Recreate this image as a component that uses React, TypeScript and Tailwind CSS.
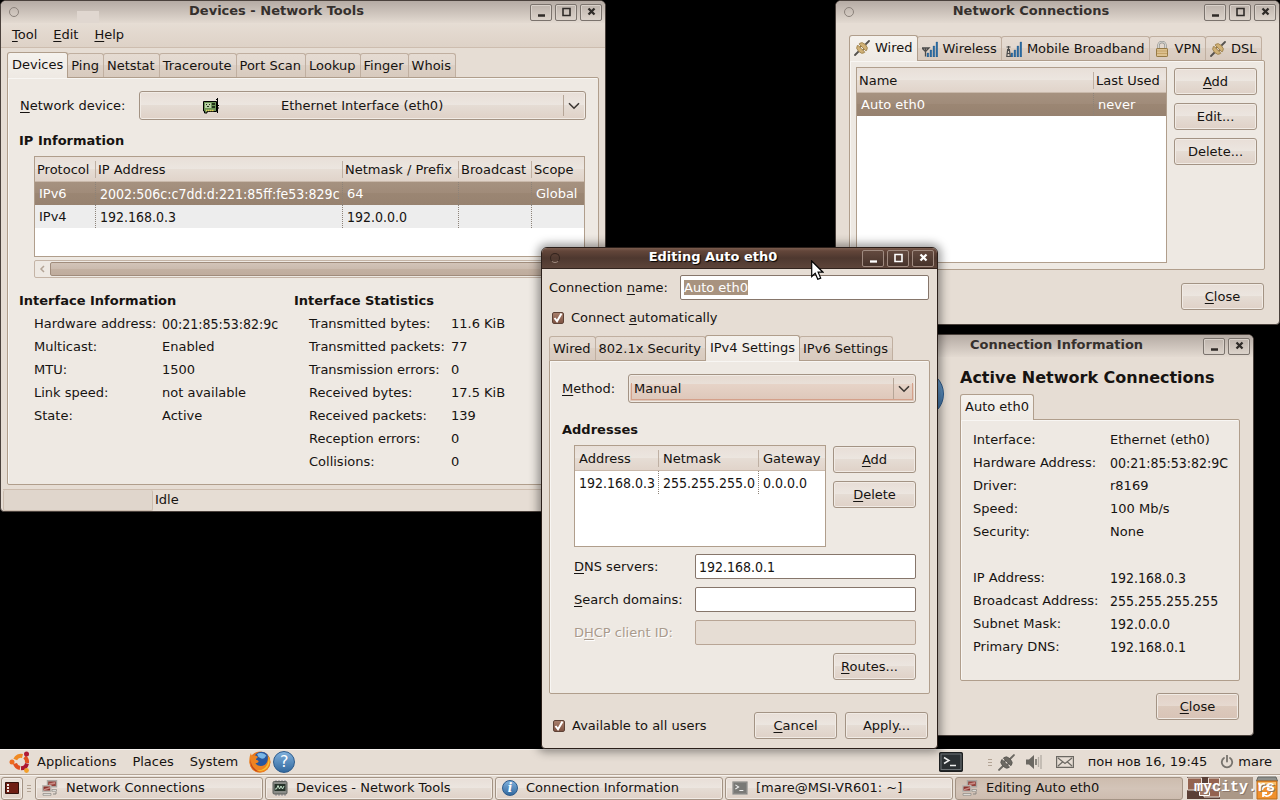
import { clsx } from "clsx";
import React, { useEffect, useRef } from "react";
import { twMerge } from "tailwind-merge";

const buttonFace =
  "border border-[#a39384] rounded-[3px] bg-[linear-gradient(#e8ded7,#ece6e0_49%,#e5dcd4_50%,#dfd1c7)] shadow-[inset_0_0_0_1px_#f1ebe5]";

// addresses are set a little narrower so that long ones fit their columns
const addressFont = "font-['DejaVu_Sans_Condensed','DejaVu_Sans',sans-serif] text-[14px]";
const isAddress = (text: string) => /^[\da-f]+([.:]+[\da-f]+){3,}$/i.test(text);

/* ---------- icons ---------- */

const PlugIcon = ({ grey = false, className = "size-4" }: { grey?: boolean; className?: string }) => (
  <svg viewBox="0 0 16 16" className={className} aria-hidden="true">
    <path d="M1 15 4.500 11.500M11.500 4.500 15 1" stroke={grey ? "#6b6862" : "#55524e"} strokeWidth="1.800" strokeLinecap="round" />
    <g transform="rotate(45 8 8)" fill={grey ? "#6b6862" : "#d0b176"} stroke={grey ? "#55534f" : "#937744"} strokeWidth=".7">
      <path d="M3 7.300h10V6.500A5 3.500 0 0 0 8 3.200a5 3.500 0 0 0-5 3.300Z" />
      <path d="M3 8.900h10v.6a5 3.500 0 0 1-5 3.300 5 3.500 0 0 1-5-3.300Z" />
      <path d="M6 7v2M10 7v2" strokeWidth="1.500" />
    </g>
  </svg>
);

const SignalIcon = ({ tower = false }: { tower?: boolean }) => (
  <svg viewBox="0 0 16 16" className="size-4 shrink-0" aria-hidden="true">
    {[
      [5, 12],
      [8, 9],
      [11, 5],
      [14, 1],
    ].map(([x, y]) => (
      <path key={x} d={`M${x} ${y}h1.800V16h-1.800Z`} fill="#2d6ea5" stroke="#1d4f7c" strokeWidth=".3" />
    ))}
    {tower ? (
      <path d="M.5 6h4M2.500 5v4M1 8.500h3M1.500 9.500h2l.8 6H.8ZM1 12.500h3" fill="none" stroke="#4b4b4b" strokeWidth="1.200" />
    ) : (
      <path d="M0 7h7L3.500 10.500ZM3.500 7v8.500" fill="none" stroke="#4b4b4b" strokeWidth="1.300" />
    )}
  </svg>
);

const LockIcon = () => (
  <svg viewBox="0 0 16 16" className="size-4 shrink-0" aria-hidden="true">
    <path d="M4.500 8V4.500a3.500 3.500 0 0 1 7 0V8" fill="none" stroke="#8d8d89" strokeWidth="2.400" />
    <path d="M4.500 8V4.500a3.500 3.500 0 0 1 7 0V8" fill="none" stroke="#d4d4d0" strokeWidth="1.200" />
    <rect x="2.500" y="7.500" width="11" height="8" rx=".6" fill="#dcc190" stroke="#967a45" />
    <path d="M3 10h10M3 12.500h10" stroke="#c5a368" />
  </svg>
);

const CardIcon = () => (
  <svg viewBox="0 0 16 16" className="size-4" aria-hidden="true">
    <path d="M.5 3.500h13v10H4v1.500H1.500v-2h-1Z" fill="#6c9457" stroke="#000" />
    <path d="M2 5h6v5H2Z" fill="#b9cfa6" />
    <path d="M3 6h1v1H3zM6 6h1v1H6zM4 8h2v1H4zM9 5h3v2H9zM9 8h3v2H9z" fill="#213219" />
    <path d="M3 12.500h8" stroke="#e4cf5b" strokeWidth="1.500" strokeDasharray="1.500 .5" />
    <path d="M14.500 0v15M13 1.500h1.500M14 7.500h2M14 10h2" stroke="#000" />
  </svg>
);

const UbuntuIcon = () => (
  <svg viewBox="0 0 22 22" className="size-[22px]" aria-hidden="true">
    <g fill="none" strokeWidth="4">
      <path d="M6.200 8.500A6.300 6.300 0 0 1 13.500 5" stroke="#f08a24" />
      <path d="M15.600 6A6.300 6.300 0 0 1 18 12" stroke="#e2501f" />
      <path d="M18 12.500A6.300 6.300 0 0 1 12 17.300" stroke="#ab1733" />
      <path d="M11 17A6.300 6.300 0 0 1 6 12.500" stroke="#e2501f" />
    </g>
    <circle cx="3" cy="11" r="2.500" fill="#ee6a1e" />
    <circle cx="17.500" cy="3" r="2.500" fill="#b01a37" />
    <circle cx="17.500" cy="19.500" r="2.400" fill="#f3a02b" />
  </svg>
);

const FirefoxIcon = () => (
  <svg viewBox="0 0 22 22" className="size-[22px]" aria-hidden="true">
    <circle cx="11" cy="11" r="10.500" fill="#e8741a" />
    <circle cx="12.500" cy="8.500" r="7.800" fill="#28579f" />
    <path d="M8 3c3-2 8-1 9.500 2-2 .5-1 2-3 2.500S11 7 9.500 6Z" fill="#79b6e6" />
    <path d="M2 2c0 2 1 3 2.500 3C6 4 8 5 9 6c-1 1-2 1.500-2 3 2 0 3 1 2.500 2-1 1-2 1-3 1 1 3 6 4 9 2 3-2 4-6 3-10 3 3 3.500 8 1.500 12-3 6-11 7-16 3C-1 14 0 6 2 2Z" fill="#ed8322" />
    <path d="M19.500 5c2 4 1 9-1.500 12-3 3-8 4-11 2 5 1 9-1 11-5 1.500-3 2-6 1.500-9Z" fill="#f9c233" />
    <path d="M1.500 8c0 6 4 11 9 12.500C5 21 .5 16 1.500 8Z" fill="#c2411a" />
  </svg>
);

const BlueBadge = ({ sign, className, textClass }: { sign: string; className: string; textClass: string }) => (
  <span
    aria-hidden="true"
    className={clsx(
      "flex shrink-0 items-center justify-center rounded-full border border-[#2b5a8c] bg-linear-to-b from-[#7fb0dc] to-[#33699f] text-white",
      className,
      textClass,
    )}
  >
    {sign}
  </span>
);

const NetworkIcon = () => (
  <svg viewBox="0 0 16 16" className="size-4 shrink-0" aria-hidden="true">
    <path d="M5.500.8h9v6h-9Z" fill="#93413a" stroke="#aaa6a1" strokeWidth="1.400" />
    <path d="M.8 5.800h8v5.500h-8Z" fill="#8a322c" stroke="#bbb7b1" strokeWidth="1.400" />
    <path d="M7 3.500 13 2v2L7 5ZM2 9l6-2v1.500L2 10.500Z" fill="#c98983" />
    <path d="M1 13.500h8v1.800H1Z" fill="#e9e7e3" stroke="#8b8782" strokeWidth=".7" />
    <path d="M10 9.500h4.500v1.800H10Z" fill="#e9e7e3" stroke="#8b8782" strokeWidth=".7" />
    <path d="M11 14h3v-2" fill="none" stroke="#8b8782" />
  </svg>
);

const ChipIcon = () => (
  <svg viewBox="0 0 16 16" className="size-4 shrink-0" aria-hidden="true">
    <path d="M4 0v16M7 0v16M10 0v16M13 0v16" stroke="#8a8a94" strokeWidth="1" />
    <rect x="1" y="1.500" width="14" height="12.500" rx="1.200" fill="#8a8c88" stroke="#5a5c58" />
    <rect x="2.500" y="4" width="11" height="7" fill="#26332a" />
    <path d="M3 9h1.500L6 5.500 7.500 9 9 6l1.500 3L12 6" fill="none" stroke="#c9e6cf" />
  </svg>
);

const TerminalIcon = ({ dim = false }: { dim?: boolean }) => (
  <svg viewBox="0 0 24 20" className={dim ? "h-[14px] w-4 shrink-0" : "h-5 w-6 shrink-0"} preserveAspectRatio="none" aria-hidden="true">
    <rect x=".7" y=".7" width="22.600" height="18.600" rx="1" fill={dim ? "#797976" : "#2b3033"} stroke={dim ? "#b0ada8" : "#1d1f20"} strokeWidth="1.400" />
    <rect x="2" y="2" width="20" height="15.500" fill="none" stroke={dim ? "#989693" : "#757b7f"} strokeWidth=".9" />
    <path d="m5 5.500 5 3-5 3M11 13.500h6" fill="none" stroke="#eee" strokeWidth="1.500" />
  </svg>
);

const SpeakerIcon = () => (
  <svg viewBox="0 0 16 16" className="size-4" aria-hidden="true">
    <path d="M0 5.500h3L8 1v14l-5-4.500H0Z" fill="#6b6862" />
    <path d="M10 5v6" stroke="#6b6862" strokeWidth="1.500" />
    <path d="M12.500 3v10M15 1v14" stroke="#b3aca4" strokeWidth="1.300" />
  </svg>
);

const MailIcon = () => (
  <svg viewBox="0 0 18 12" className="h-3 w-[18px]" aria-hidden="true">
    <path d="M.6.6h16.800v10.800H.6ZM2 2l7 5.500L16 2M2 10l4.500-4M16 10l-4.500-4" fill="none" stroke="#6b6862" strokeWidth="1.200" />
  </svg>
);

const PowerIcon = () => (
  <svg viewBox="0 0 14 14" className="size-[14px]" aria-hidden="true">
    <path d="M4 3a5.200 5.200 0 1 0 6 0M7 .5v6" fill="none" stroke="#77736d" strokeWidth="1.800" strokeLinecap="round" />
  </svg>
);

const TrashIcon = () => (
  <svg viewBox="0 0 22 24" className="h-6 w-[22px] shrink-0" aria-hidden="true">
    <path d="M2 1h18l1.500 4H.5Z" fill="#8e908c" stroke="#666864" />
    <path d="M1 5h20v18H1Z" fill="#f0912d" stroke="#bd6a17" />
    <path d="M2 6h18v3H2Z" fill="#f8bd6c" />
    <path d="M6 14a5 5 0 0 1 9-2M16 15a5 5 0 0 1-9 3M15 8.500V12.500h-4M7 21v-4h4" fill="none" stroke="#fff" strokeWidth="1.800" />
  </svg>
);

const Chevron = () => (
  <svg viewBox="0 0 12 8" className="h-2 w-3" aria-hidden="true">
    <path d="m1 1.200 5 5 5-5" fill="none" stroke="#3c3733" strokeWidth="1.600" />
  </svg>
);

const Pointer = () => (
  <svg viewBox="0 0 13 20" className="absolute left-[811px] top-[260px] z-50 h-5 w-[13px]" aria-hidden="true">
    <path d="M.7 1v15.500L4.200 13.200l2.600 6.100 2.900-1.200-2.600-5.900H12Z" fill="#fff" stroke="#000" strokeWidth="1.200" />
  </svg>
);

/* ---------- window parts ---------- */

type WindowProps = {
  title: string;
  className: string;
  active?: boolean;
  resizable?: boolean;
  children: React.ReactNode;
};

const glyphs: Record<string, string> = {
  Minimise: "M2 9.500h7",
  Maximise: "M2 2.500h7v7H2Z",
  Close: "m2.500 2.500 6 6m0-6-6 6",
};

const Window = ({ title, className, active = false, resizable = true, children }: WindowProps) => (
  <section
    aria-label={title}
    className={clsx(
      "absolute overflow-hidden rounded-t-[6px] rounded-b-[4px] border bg-[#e6ddd4]",
      active ? "z-10 border-[#2b1f1a] shadow-[0_0_10px_3px_rgba(0,0,0,0.4)]" : "border-[#4a413c]",
      className,
    )}
  >
    <header
      className={clsx(
        "flex items-center",
        active
          ? "h-[21px] border-b border-[#32241e] bg-[linear-gradient(#7a5c4e,#63463a_15%,#4e382f_50%,#5d4439)]"
          : "h-[22px] bg-linear-to-b from-[#b5aba4] to-[#e3dad1]",
      )}
    >
      <span className="flex w-[26px] shrink-0 justify-center">
        <span className={clsx("size-[10px] rounded-full border", active ? "border-[#33241e] border-b-[#a48f83]" : "border-[#8b827b]")} />
      </span>
      <h1
        className={clsx(
          "flex-1 pb-[2px] pr-1 text-center font-bold leading-[18px]",
          active ? "text-white [text-shadow:1px_1px_1px_#000]" : "text-[#35302d]",
        )}
      >
        {title}
      </h1>
      <div className="flex shrink-0 gap-[3px] pr-[3px]">
        {Object.keys(glyphs)
          .filter((name) => resizable || name !== "Maximise")
          .map((name) => (
            <button
              key={name}
              type="button"
              aria-label={name}
              className={clsx(
                "flex h-[17px] w-[22px] items-center justify-center rounded-[2px] border",
                active
                  ? "border-[#a08b80] bg-linear-to-b from-[#634a3f] to-[#47332b] text-white"
                  : "border-[#7b736d] text-[#2f2b28] shadow-[inset_0_0_0_1px_#d9d1ca]",
              )}
            >
              <svg viewBox="0 0 11 12" className="h-3 w-[11px]" aria-hidden="true">
                <path d={glyphs[name]} fill="none" stroke="currentColor" strokeWidth={name === "Maximise" ? 1.6 : 2.3} />
              </svg>
            </button>
          ))}
      </div>
    </header>
    {children}
  </section>
);

type Tab = { label: string; icon?: React.ReactNode };

const Tabs = ({ tabs, selected }: { tabs: Tab[]; selected: string }) => (
  <div role="tablist" className="flex items-end pl-px">
    {tabs.map(({ label, icon }) => {
      const isSelected = label === selected;
      return (
        <button
          key={label}
          type="button"
          role="tab"
          aria-selected={isSelected}
          className={clsx(
            "-ml-px flex items-center whitespace-nowrap rounded-t-[3px] border border-b-0",
            icon && "gap-[5px] px-1",
            isSelected
              ? "relative z-[1] -mb-px h-[26px] border-[#b09e8c] bg-linear-to-b from-[#f5f2ee] to-[#eee9e3] pb-[2px]"
              : "h-6 border-[#c0afa0] bg-[linear-gradient(#e5dbd2,#e2d8cf_49%,#dcd0c5_50%,#d8cabe)]",
            !icon && (isSelected ? "px-1" : "pl-[3px] pr-1"),
          )}
        >
          {icon}
          {label}
        </button>
      );
    })}
  </div>
);

const pageClass = "rounded-b-[2px] rounded-tr-[2px] border border-[#b09e8c] bg-[#eee9e3] shadow-[inset_1px_1px_0_#f8f6f3]";

/* Label with an underlined access key */
const Key = ({ text, at = 0 }: { text: string; at?: number }) => (
  <span>
    {text.slice(0, at)}
    <span className="underline underline-offset-2">{text[at]}</span>
    {text.slice(at + 1)}
  </span>
);

const PushButton = ({ children, className }: { children: React.ReactNode; className?: string }) => (
  <button type="button" className={twMerge("h-[27px] w-[83px] shrink-0", buttonFace, className)}>
    {children}
  </button>
);

type GridTableProps = {
  label: string;
  columns: string[];
  widths: string[];
  rows: string[][];
  selectedRow?: number;
  roomy?: boolean;
};

const GridTable = ({ label, columns, widths, rows, selectedRow, roomy = false }: GridTableProps) => (
  <table aria-label={label} className="w-full table-fixed border-separate border-spacing-0 text-left">
    <colgroup>
      {widths.map((width, i) => (
        <col key={i} className={width} />
      ))}
    </colgroup>
    <thead>
      <tr className="bg-[linear-gradient(#e8dfd8,#ece6e0_49%,#e6ddd5_50%,#e0d3c9)]">
        {columns.map((column, i) => (
          <th key={column} scope="col" className="h-[25px] border-b border-[#c9b9ab] p-0 font-normal">
            <span
              className={clsx(
                "block h-[17px] whitespace-nowrap leading-[17px]",
                roomy ? "pl-1" : "pl-[2px]",
                i < columns.length - 1 && "border-r border-[#bfb0a3]",
              )}
            >
              {column}
            </span>
          </th>
        ))}
      </tr>
    </thead>
    <tbody>
      {rows.map((row, r) => (
        <tr
          key={row[0]}
          className={clsx(
            r === selectedRow && "bg-[linear-gradient(#a69280,#a08b79_49%,#9b8673_50%,#978270)] text-white",
            r !== selectedRow && r % 2 === 1 && "bg-[#ededed]",
          )}
        >
          {row.map((cell, i) => (
            <td
              key={i}
              className={clsx(
                "h-[23px] whitespace-nowrap p-0 pl-1",
                isAddress(cell) && addressFont,
                i < row.length - 1 && "border-r border-dotted border-[#8d8379]",
              )}
            >
              {cell}
            </td>
          ))}
        </tr>
      ))}
    </tbody>
  </table>
);

const InfoList = ({ rows, labelWidth }: { rows: string[][]; labelWidth: string }) => (
  <dl>
    {rows.map(([label, value], i) => (
      <div key={i} className="flex h-[23px] items-center whitespace-nowrap">
        <dt className={labelWidth}>{label}</dt>
        <dd className={clsx(isAddress(value) && addressFont)}>{value}</dd>
      </div>
    ))}
  </dl>
);

const CheckBox = ({ id, children }: { id: string; children: React.ReactNode }) => (
  <div className="flex items-center gap-[7px]">
    <span className="relative flex">
      <input
        id={id}
        type="checkbox"
        defaultChecked
        className="peer size-3 appearance-none rounded-[2px] border border-[#5e4236] bg-white checked:bg-linear-to-b checked:from-[#a87f6c] checked:to-[#805443]"
      />
      <svg viewBox="0 0 12 12" className="pointer-events-none absolute inset-0 hidden size-3 peer-checked:block" aria-hidden="true">
        <path d="m2.500 6 2.500 3.200L9.500 1.500" fill="none" stroke="#fff" strokeWidth="2" />
      </svg>
    </span>
    <label htmlFor={id}>{children}</label>
  </div>
);

const Select = ({ id, value, className, tinted = false }: { id: string; value: string; className: string; tinted?: boolean }) => (
  <span className="relative flex flex-1">
    <select
      id={id}
      defaultValue={value}
      className={twMerge(
        "h-[29px] w-full appearance-none outline-none",
        buttonFace,
        tinted && "bg-[linear-gradient(#e6d9d0,#e9e0d8_34%,#e6d3c7_35%,#ddc6b8)]",
        className,
      )}
    >
      <option>{value}</option>
    </select>
    {tinted && <span className="pointer-events-none absolute inset-x-[3px] bottom-[3px] top-[9px] border border-t-0 border-[#d4a08a]" />}
    <span className="pointer-events-none absolute inset-y-1 right-0 flex w-[23px] items-center justify-center border-l border-[#b5a597] pr-[2px]">
      <Chevron />
    </span>
  </span>
);

const entryClass =
  "h-[25px] min-w-0 flex-1 rounded-[2px] border border-[#86766b] bg-white px-[3px] outline-none selection:bg-[#a8937f] selection:text-white disabled:border-[#b8a595] disabled:bg-[#e6ddd4]";

/* ---------- windows ---------- */

const interfaceInfo = [
  ["Hardware address:", "00:21:85:53:82:9c"],
  ["Multicast:", "Enabled"],
  ["MTU:", "1500"],
  ["Link speed:", "not available"],
  ["State:", "Active"],
];

const interfaceStats = [
  ["Transmitted bytes:", "11.6 KiB"],
  ["Transmitted packets:", "77"],
  ["Transmission errors:", "0"],
  ["Received bytes:", "17.5 KiB"],
  ["Received packets:", "139"],
  ["Reception errors:", "0"],
  ["Collisions:", "0"],
];

const connectionInfo = [
  ["Interface:", "Ethernet (eth0)"],
  ["Hardware Address:", "00:21:85:53:82:9C"],
  ["Driver:", "r8169"],
  ["Speed:", "100 Mb/s"],
  ["Security:", "None"],
  ["", ""],
  ["IP Address:", "192.168.0.3"],
  ["Broadcast Address:", "255.255.255.255"],
  ["Subnet Mask:", "192.0.0.0"],
  ["Primary DNS:", "192.168.0.1"],
];

const NetworkTools = () => (
  <Window title="Devices - Network Tools" className="left-0 top-0 w-[606px]">
    <span className="absolute left-[76px] top-[10px] h-3 w-[22px] bg-[#e0d7d0]" />
    <nav className="flex h-[25px] items-center gap-4 border-b border-[#cdbdaf] bg-linear-to-b from-[#e6ddd4] to-[#ded2c7] pl-[11px]">
      {["Tool", "Edit", "Help"].map((item) => (
        <button key={item} type="button">
          <Key text={item} />
        </button>
      ))}
    </nav>
    <div className="px-[6px] pt-1">
      <Tabs
        selected="Devices"
        tabs={["Devices", "Ping", "Netstat", "Traceroute", "Port Scan", "Lookup", "Finger", "Whois"].map((label) => ({ label }))}
      />
      <div className={clsx("pb-[11px] pl-[11px] pr-3 pt-[13px]", pageClass)}>
        <div className="relative flex items-center">
          <label htmlFor="device" className="w-[120px] pl-px">
            <Key text="Network device:" />
          </label>
          <Select id="device" value="Ethernet Interface (eth0)" className="pl-[141px]" />
          <span className="pointer-events-none absolute left-[184px]">
            <CardIcon />
          </span>
        </div>
        <h2 className="mt-[11px] font-bold leading-5">IP Information</h2>
        <div className="ml-[15px] mr-px mt-[5px] h-[101px] border border-[#b09e8c] bg-white">
          <GridTable
            label="IP Information"
            columns={["Protocol", "IP Address", "Netmask / Prefix", "Broadcast", "Scope"]}
            widths={["w-[61px]", "w-[247px]", "w-[116px]", "w-[73px]", "w-auto"]}
            rows={[
              ["IPv6", "2002:506c:c7dd:d:221:85ff:fe53:829c", "64", "", "Global"],
              ["IPv4", "192.168.0.3", "192.0.0.0", "", ""],
            ]}
            selectedRow={0}
          />
        </div>
        <div className="ml-[15px] mr-px mt-[3px] flex h-[18px] items-center rounded-[2px] border border-[#c4b4a6] bg-[#eee9e3]">
          <svg viewBox="0 0 15 16" className="h-4 w-[15px]" aria-hidden="true">
            <path d="m9 5-3 3 3 3" fill="none" stroke="#b3a496" strokeWidth="1.500" />
          </svg>
          <span className="h-[14px] flex-1 rounded-[2px] border border-[#a08c7c] bg-[linear-gradient(#d2c4b8,#cbbbae_49%,#c3b1a2_50%,#bfac9d)]" />
        </div>
        <div className="mt-[11px] flex">
          <div className="w-[275px]">
            <h2 className="font-bold leading-[23px]">Interface Information</h2>
            <div className="pl-[15px]">
              <InfoList rows={interfaceInfo} labelWidth="w-32" />
            </div>
          </div>
          <div>
            <h2 className="font-bold leading-[23px]">Interface Statistics</h2>
            <div className="pl-[15px]">
              <InfoList rows={interfaceStats} labelWidth="w-[142px]" />
            </div>
          </div>
        </div>
      </div>
    </div>
    <footer className="ml-[2px] mt-1 flex h-[22px] items-center border-t border-[#cdbdaf]">
      <span className="h-[21px] w-[150px] rounded-[2px] border border-t-0 border-[#cbbcae] bg-[#e0d6cc]" />
      <span className="pb-[2px] pl-[2px]">Idle</span>
    </footer>
  </Window>
);

const NetworkConnections = () => (
  <Window title="Network Connections" className="left-[835px] top-0 w-[445px]">
    <div className="pb-[14px] pl-[13px] pr-[14px] pt-3">
      <Tabs
        selected="Wired"
        tabs={[
          { label: "Wired", icon: <PlugIcon /> },
          { label: "Wireless", icon: <SignalIcon /> },
          { label: "Mobile Broadband", icon: <SignalIcon tower /> },
          { label: "VPN", icon: <LockIcon /> },
          { label: "DSL", icon: <PlugIcon /> },
        ]}
      />
      <div className={clsx("flex gap-[7px] p-[6px]", pageClass)}>
        <div className="h-[196px] flex-1 border border-[#b09e8c] bg-white">
          <GridTable
            label="Connections"
            columns={["Name", "Last Used"]}
            widths={["w-[237px]", "w-auto"]}
            rows={[["Auto eth0", "never"]]}
            selectedRow={0}
          />
        </div>
        <div className="flex flex-col gap-2 pr-px pt-px">
          <PushButton>
            <Key text="Add" />
          </PushButton>
          <PushButton>Edit...</PushButton>
          <PushButton>Delete...</PushButton>
        </div>
      </div>
      <div className="mt-[13px] flex justify-end pr-px">
        <PushButton>
          <Key text="Close" />
        </PushButton>
      </div>
    </div>
  </Window>
);

const ConnectionInformation = () => (
  <Window title="Connection Information" resizable={false} className="left-[887px] top-[334px] w-[367px]">
    <div className="flex gap-4 pb-[15px] pl-2 pr-[13px] pt-[9px]">
      <BlueBadge sign="i" className="mt-1 size-12" textClass="text-[32px] font-bold italic" />
      <div className="flex-1">
        <h2 className="mb-1 whitespace-nowrap text-base font-bold leading-6">Active Network Connections</h2>
        <Tabs selected="Auto eth0" tabs={[{ label: "Auto eth0" }]} />
        <div className={clsx("pb-[22px] pl-3 pt-2", pageClass)}>
          <InfoList rows={connectionInfo} labelWidth="w-[137px]" />
        </div>
        <div className="mt-3 flex justify-end pr-px">
          <PushButton className="bg-[linear-gradient(#e2d2c7,#e6d9d0_49%,#dccabd_50%,#d8c3b6)]">
            <Key text="Close" />
          </PushButton>
        </div>
      </div>
    </div>
  </Window>
);

const EditConnection = () => {
  const nameRef = useRef<HTMLInputElement>(null);

  useEffect(() => {
    nameRef.current?.focus();
    nameRef.current?.select();
  }, []);

  return (
    <Window title="Editing Auto eth0" active className="left-[541px] top-[247px] w-[397px]">
      <div className="px-[7px] pb-[9px] pt-[6px]">
        <div className="flex items-center pr-px">
          <label htmlFor="name" className="w-[131px]">
            <Key text="Connection name:" at={11} />
          </label>
          <input ref={nameRef} id="name" type="text" defaultValue="Auto eth0" className={entryClass} />
        </div>
        <div className="mt-2 flex h-5 items-center pl-[3px]">
          <CheckBox id="auto">
            <Key text="Connect automatically" at={8} />
          </CheckBox>
        </div>
        <div className="mt-[7px]">
          <Tabs
            selected="IPv4 Settings"
            tabs={["Wired", "802.1x Security", "IPv4 Settings", "IPv6 Settings"].map((label) => ({ label }))}
          />
        </div>
        <div className={clsx("py-[13px] pl-3 pr-[13px]", pageClass)}>
          <div className="flex items-center">
            <label htmlFor="method" className="w-[66px]">
              <Key text="Method:" />
            </label>
            <Select id="method" value="Manual" tinted className="pl-[5px]" />
          </div>
          <h2 className="mb-[5px] mt-[17px] font-bold leading-5">Addresses</h2>
          <div className="flex flex-col gap-2 pl-3">
            <div className="-mb-px flex gap-[7px]">
              <div className="h-[102px] flex-1 border border-[#b09e8c] bg-white">
                <GridTable
                  label="Addresses"
                  columns={["Address", "Netmask", "Gateway"]}
                  widths={["w-[84px]", "w-[100px]", "w-auto"]}
                  rows={[["192.168.0.3", "255.255.255.0", "0.0.0.0"]]}
                  roomy
                />
              </div>
              <div className="flex flex-col gap-2 pt-px">
                <PushButton>
                  <Key text="Add" />
                </PushButton>
                <PushButton>
                  <Key text="Delete" />
                </PushButton>
              </div>
            </div>
            <div className="flex items-center">
              <label htmlFor="dns" className="w-[121px]">
                <Key text="DNS servers:" />
              </label>
              <input id="dns" type="text" defaultValue="192.168.0.1" className={clsx(entryClass, addressFont)} />
            </div>
            <div className="flex items-center">
              <label htmlFor="search" className="w-[121px]">
                <Key text="Search domains:" />
              </label>
              <input id="search" type="text" className={entryClass} />
            </div>
            <div className="flex items-center">
              <label htmlFor="dhcp" className="w-[121px] text-[#a99a8c] [text-shadow:1px_1px_0_#fff]">
                <Key text="DHCP client ID:" at={1} />
              </label>
              <input id="dhcp" type="text" disabled className={entryClass} />
            </div>
            <div className="flex justify-end">
              <PushButton className="pl-[7px] text-left">
                <Key text="Routes..." />
              </PushButton>
            </div>
          </div>
        </div>
        <div className="mt-[18px] flex items-center gap-2 pl-1 pr-[2px]">
          <div className="flex-1">
            <CheckBox id="shared">Available to all users</CheckBox>
          </div>
          <PushButton>
            <Key text="Cancel" />
          </PushButton>
          <PushButton>Apply...</PushButton>
        </div>
      </div>
    </Window>
  );
};

/* ---------- panels ---------- */

const Grip = () => (
  <span className="flex shrink-0 flex-col gap-[2px]">
    {[0, 1, 2].map((i) => (
      <span key={i} className="h-px w-1 bg-[#b3a495]" />
    ))}
  </span>
);

const TopPanel = () => (
  <nav className="flex h-[26px] shrink-0 items-center border-b border-t border-b-[#b5a596] border-t-[#f6f2ee] bg-[#e6ddd4] pl-[9px] pr-2">
    <UbuntuIcon />
    <div className="ml-[6px] flex gap-4">
      <button type="button">Applications</button>
      <button type="button">Places</button>
      <button type="button">System</button>
    </div>
    <button type="button" aria-label="Firefox" className="ml-[11px]">
      <FirefoxIcon />
    </button>
    <button type="button" aria-label="Help" className="ml-[2px] flex">
      <BlueBadge sign="?" className="size-[22px]" textClass="text-[16px]" />
    </button>
    <button type="button" aria-label="Terminal" className="ml-auto">
      <TerminalIcon />
    </button>
    <div className="ml-[25px] flex items-center">
      <Grip />
      <PlugIcon grey className="ml-[6px] size-[17px]" />
      <span className="ml-[11px]">
        <SpeakerIcon />
      </span>
      <span className="ml-[14px]">
        <MailIcon />
      </span>
      <span className="ml-[14px]">пон нов 16, 19:45</span>
      <button type="button" className="ml-[13px] flex items-center gap-1">
        <PowerIcon />
        mare
      </button>
    </div>
  </nav>
);

const tasks = [
  { label: "Network Connections", icon: <NetworkIcon /> },
  { label: "Devices - Network Tools", icon: <ChipIcon /> },
  { label: "Connection Information", icon: <BlueBadge sign="i" className="size-4" textClass="font-['DejaVu_Serif',serif] text-[12px] font-bold italic" /> },
  { label: "[mare@MSI-VR601: ~]", icon: <TerminalIcon dim /> },
  { label: "Editing Auto eth0", icon: <NetworkIcon />, active: true },
];

const TaskPanel = () => (
  <footer className="relative flex h-[25px] shrink-0 items-center border-t border-[#f6f2ee] bg-[#e6ddd4] pl-px pr-[2px]">
    <button type="button" aria-label="Show desktop" className={clsx("flex h-[23px] w-[22px] shrink-0 items-center justify-center", buttonFace)}>
      <svg viewBox="0 0 14 12" className="h-3 w-[14px]" aria-hidden="true">
        <path d="M.5.5h13v11H.5Z" fill="#6f1e14" stroke="#33100b" />
        <path d="M2 2h2v2H2zM2 5h2v2H2zM2 8h2v2H2z" fill="#f2e9e4" />
      </svg>
    </button>
    <span className="ml-1 mr-1">
      <Grip />
    </span>
    <div className="flex min-w-0 flex-1 gap-[2px]">
      {tasks.map(({ label, icon, active }) => (
        <button
          key={label}
          type="button"
          className={twMerge(
            "flex h-[23px] min-w-0 flex-1 items-center whitespace-nowrap pl-[6px]",
            buttonFace,
            active && "bg-[linear-gradient(#cdbcae,#d3c4b8_50%,#cdbcaf)] shadow-none",
          )}
        >
          {icon}
          <span className="ml-2">{label}</span>
        </button>
      ))}
    </div>
    <svg viewBox="0 0 66 22" className="ml-1 h-[22px] w-[66px] shrink-0" role="img" aria-label="Workspaces">
      <path d="M0 0h33v22H0Z" fill="#5b4037" />
      <path d="M33 0h33v22H33Z" fill="#ab9887" />
      <path d="M.5 1h14v12H.5ZM21.500 1h11v8h-11ZM17 11h15.500v9H17Z" fill="#93624f" stroke="#e9e0d8" />
      <path d="M12.500 6.500H22.500V18.500H12.500Z" fill="#a57a67" stroke="#fff" />
    </svg>
    <button type="button" aria-label="Trash" className="ml-[3px]">
      <TrashIcon />
    </button>
    <span className="pointer-events-none absolute bottom-0 right-[5px] font-['Liberation_Mono',monospace] text-[15px] font-bold leading-6 text-white [text-shadow:1px_1px_0_#8b776a]">
      mycity.rs
    </span>
  </footer>
);

const App = () => (
  <div className="flex h-screen flex-col overflow-hidden bg-black font-['DejaVu_Sans',sans-serif] text-[13px] leading-[18px] text-[#161311]">
    <main className="relative flex-1">
      <NetworkTools />
      <NetworkConnections />
      <ConnectionInformation />
      <EditConnection />
      <Pointer />
    </main>
    <TopPanel />
    <TaskPanel />
  </div>
);

export default App;
